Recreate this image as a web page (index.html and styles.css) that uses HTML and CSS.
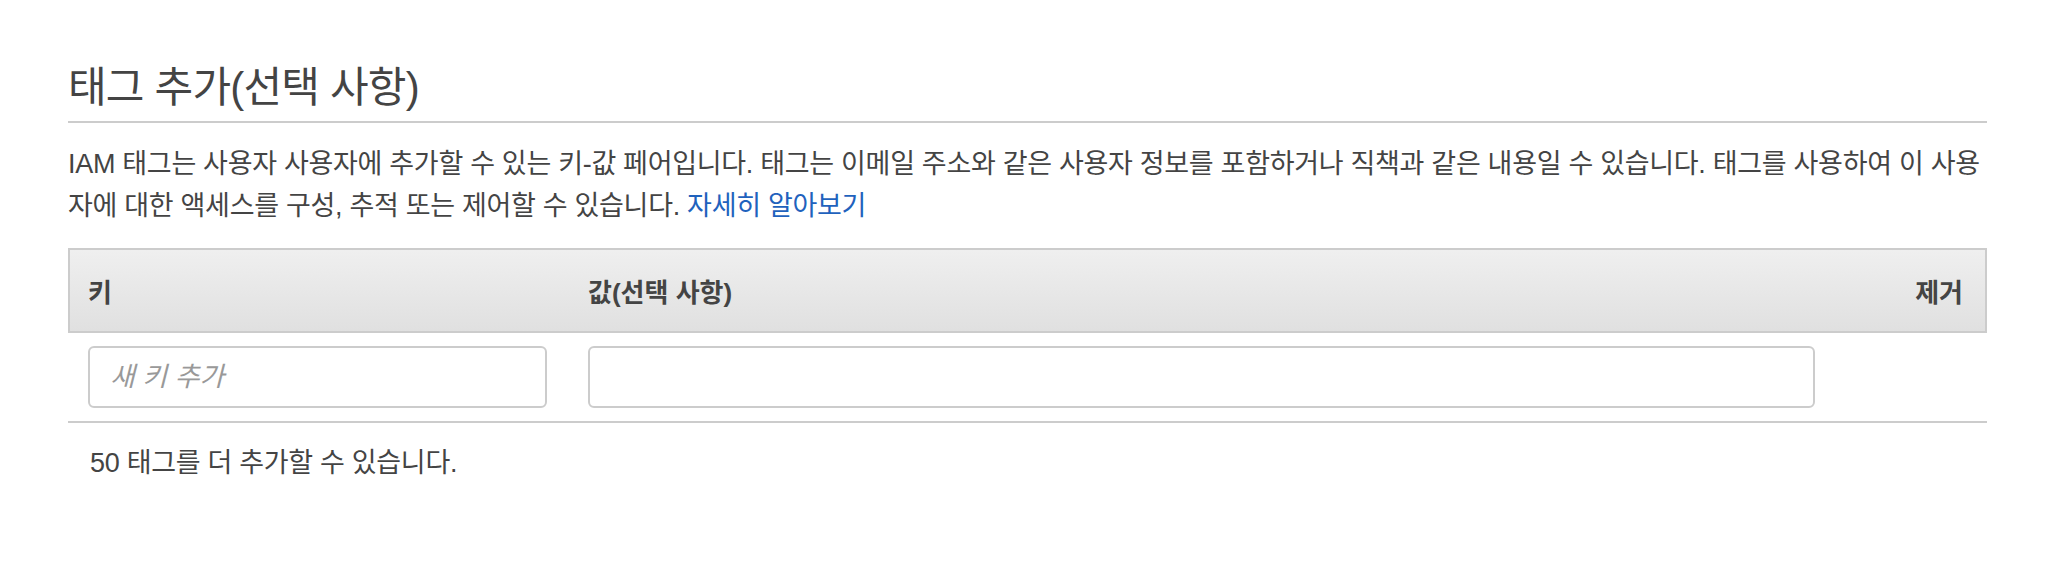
FILE: index.html
```html
<!DOCTYPE html>
<html lang="ko">
<head>
<meta charset="utf-8">
<title>태그 추가</title>
<link rel="stylesheet" href="styles.css">
</head>
<body>
<div class="page">
  <h2 class="title">태그 추가(선택 사항)</h2>
  <p class="desc">IAM 태그는 사용자 사용자에 추가할 수 있는 키-값 페어입니다. 태그는 이메일 주소와 같은 사용자 정보를 포함하거나 직책과 같은 내용일 수 있습니다. 태그를 사용하여 이 사용자에 대한 액세스를 구성, 추적 또는 제어할 수 있습니다. <a class="link" href="#">자세히 알아보기</a></p>
  <div class="tags">
    <div class="tags-head">
      <div class="th">키</div>
      <div class="th">값(선택 사항)</div>
      <div class="th th-right">제거</div>
    </div>
    <div class="tags-row">
      <input class="field" type="text" placeholder="새 키 추가">
      <input class="field" type="text">
      <div class="remove-cell"></div>
    </div>
  </div>
  <p class="footer-note">50 태그를 더 추가할 수 있습니다.</p>
</div>
</body>
</html>
```

FILE: styles.css
```css
html, body {
  margin: 0;
  padding: 0;
  background: #ffffff;
}

body {
  font-family: "Liberation Sans", "Noto Sans CJK KR", sans-serif;
  color: #444444;
}

.page {
  width: 1919px;
  margin-left: 68px;
  padding-top: 58px;
}

.title {
  margin: 0;
  font-size: 42px;
  font-weight: normal;
  line-height: 60px;
  letter-spacing: -0.8px;
  color: #444444;
  padding-bottom: 3px;
  border-bottom: 2px solid #cccccc;
}

.desc {
  margin: 20px 0 0 0;
  font-size: 27px;
  line-height: 42px;
  letter-spacing: -0.3px;
  color: #444444;
}

.link {
  color: #1f62bd;
  text-decoration: none;
}

.tags {
  margin-top: 21px;
}

.tags-head {
  display: grid;
  grid-template-columns: 459px 1227px 1fr;
  column-gap: 41px;
  align-items: center;
  height: 81px;
  padding: 0 22px 0 18px;
  border: 2px solid #cccccc;
  background: linear-gradient(#efefef, #e0e0e0);
}

.th {
  font-size: 26px;
  font-weight: bold;
  color: #444444;
}

.th-right {
  text-align: right;
}

.tags-row {
  display: grid;
  grid-template-columns: 459px 1227px 1fr;
  column-gap: 41px;
  padding: 13px 22px 13px 20px;
  border-bottom: 2px solid #cccccc;
}

.field {
  box-sizing: border-box;
  height: 62px;
  margin: 0;
  padding: 0 20px;
  border: 2px solid #cccccc;
  border-radius: 6px;
  font-family: "Liberation Sans", "Noto Sans CJK KR", sans-serif;
  font-size: 27px;
  color: #444444;
  background: #ffffff;
  outline: none;
}

.field::placeholder {
  color: #999999;
  font-style: italic;
}

.footer-note {
  margin: 19px 0 0 0;
  padding-left: 22px;
  font-size: 27px;
  line-height: 42px;
  letter-spacing: -0.3px;
  color: #444444;
}
```
